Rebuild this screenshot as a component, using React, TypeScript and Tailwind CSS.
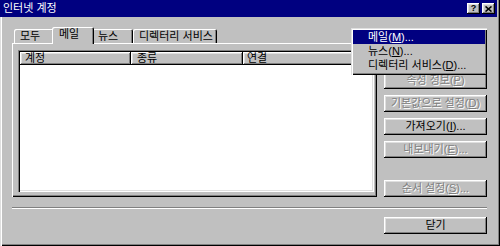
import React from "react";

const raised =
  "shadow-[inset_-1px_-1px_#000,inset_1px_1px_#fff,inset_-2px_-2px_#808080,inset_2px_2px_#dfdfdf]";
const disabledText = "text-[#808080] [text-shadow:1px_1px_0_#fff]";

function Btn({
  children,
  disabled,
  className = "",
}: {
  children: React.ReactNode;
  disabled?: boolean;
  className?: string;
}) {
  return (
    <div
      className={`flex h-[17px] w-[103px] items-center justify-center bg-[#c0c0c0] ${raised} ${
        disabled ? disabledText : "text-black"
      } ${className}`}
    >
      {children}
    </div>
  );
}

function Tab({ label, width, active }: { label: string; width: string; active?: boolean }) {
  if (active) {
    return (
      <div
        className={`relative z-10 mx-[-2px] mb-[-1px] flex h-[17px] items-start rounded-t-[2px] bg-[#c0c0c0] pl-[7px] pt-[2px] shadow-[inset_1px_1px_#fff,inset_-1px_0_#000,inset_-2px_0_#808080] ${width}`}
      >
        {label}
      </div>
    );
  }
  return (
    <div
      className={`flex h-[14px] items-center rounded-t-[2px] bg-[#c0c0c0] pl-[6px] shadow-[inset_1px_1px_#fff,inset_-1px_0_#000,inset_-2px_0_#808080] ${width}`}
    >
      {label}
    </div>
  );
}

export default function App() {
  return (
    <div className="relative h-[246px] w-[500px] overflow-hidden bg-[#c0c0c0] font-['Liberation_Sans','Noto_Sans_CJK_KR',sans-serif] text-[11px] leading-none text-black shadow-[inset_1px_0_#dfdfdf,inset_2px_0_#fff,inset_-1px_-1px_#000,inset_-2px_-2px_#808080]">
      {/* title bar */}
      <div className="mr-[3px] flex h-[17px] items-center justify-between bg-[#000080] pl-[3px] pr-[2px]">
        <span className="text-[11px] text-white">인터넷 계정</span>
        <div className="flex gap-[2px]">
          <div className={`flex h-[11px] w-[13px] items-center justify-center bg-[#c0c0c0] text-[9px] font-bold ${raised}`}>
            ?
          </div>
          <div className={`flex h-[11px] w-[13px] items-center justify-center bg-[#c0c0c0] ${raised}`}>
            <svg width="7" height="6" viewBox="0 0 7 6">
              <path d="M0.5 0.5L6.5 5.5M6.5 0.5L0.5 5.5" stroke="#000" strokeWidth="1.6" />
            </svg>
          </div>
        </div>
      </div>

      <div className="flex gap-[7px] pl-[12px] pt-[10px]">
        {/* tabs + panel */}
        <div className="w-[365px]">
          <div className="flex h-[16px] items-end pl-[2px]">
            <Tab label="모두" width="w-[40px]" />
            <Tab label="메일" width="w-[42px]" active />
            <Tab label="뉴스" width="w-[41px]" />
            <Tab label="디렉터리 서비스" width="w-[84px]" />
          </div>
          <div className="h-[154px] bg-[#c0c0c0] pb-[5px] pl-[6px] pr-[3px] pt-[7px] shadow-[inset_1px_1px_#fff,inset_-1px_-1px_#000,inset_-2px_-2px_#808080]">
            <div className="flex h-full flex-col bg-white p-[2px] shadow-[inset_1px_1px_#808080,inset_2px_2px_#000,inset_-1px_-1px_#fff,inset_-2px_-2px_#dfdfdf]">
              <div className="flex h-[13px]">
                <div className={`flex w-[111px] items-center bg-[#c0c0c0] pl-[5px] ${raised}`}>계정</div>
                <div className={`flex w-[112px] items-center bg-[#c0c0c0] pl-[6px] ${raised}`}>종류</div>
                <div className={`flex flex-1 items-center bg-[#c0c0c0] pl-[4px] ${raised}`}>연결</div>
              </div>
            </div>
          </div>
        </div>

        {/* buttons */}
        <div className="flex w-[103px] flex-col gap-[6px] pt-[45px]">
          <Btn disabled>
            속성 정보(<u>P</u>)
          </Btn>
          <Btn disabled>
            기본값으로 설정(<u>D</u>)
          </Btn>
          <Btn>
            가져오기(<u>I</u>)...
          </Btn>
          <Btn disabled>
            내보내기(<u>E</u>)...
          </Btn>
          <Btn disabled className="mt-[16px]">
            순서 설정(<u>S</u>)...
          </Btn>
        </div>
      </div>

      {/* separator */}
      <div className="ml-[12px] mt-[10px] h-[2px] w-[475px] border-b border-t border-b-white border-t-[#808080]" />

      <div className="ml-[384px] mt-[8px]">
        <Btn>닫기</Btn>
      </div>

      {/* popup menu */}
      <div className="absolute left-[351px] top-[28px] z-20 w-[136px] bg-[#c0c0c0] p-[2px] pb-[3px] shadow-[inset_1px_1px_#dfdfdf,inset_2px_2px_#fff,inset_-1px_-1px_#000,inset_-2px_-2px_#808080]">
        <div className="flex h-[14px] items-center bg-[#000080] pl-[15px] text-white">
          메일(<u>M</u>)...
        </div>
        <div className="flex h-[14px] items-center pl-[15px]">
          뉴스(<u>N</u>)...
        </div>
        <div className="flex h-[14px] items-center pl-[15px]">
          디렉터리 서비스(<u>D</u>)...
        </div>
      </div>
    </div>
  );
}
